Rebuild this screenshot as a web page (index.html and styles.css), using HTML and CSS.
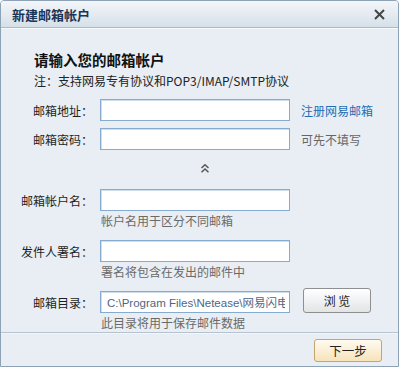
FILE: index.html
```html
<!DOCTYPE html>
<html lang="zh-CN">
<head>
    <meta charset="UTF-8">
    <title>新建邮箱帐户</title>
    <link rel="stylesheet" href="styles.css">
</head>
<body>
    <div class="window">
        <div class="titlebar">
            <span class="title">新建邮箱帐户</span>
            <span class="close">
                <svg width="11" height="11" viewBox="0 0 11 11">
                    <path d="M1 1 L10 10 M10 1 L1 10" stroke="#454545" stroke-width="2" fill="none"/>
                </svg>
            </span>
        </div>

        <div class="content">
            <h1 class="heading">请输入您的邮箱帐户</h1>
            <p class="note">注：支持网易专有协议和POP3/IMAP/SMTP协议</p>

            <div class="row first">
                <label class="label">邮箱地址：</label>
                <input class="field" type="text">
                <a href="#" class="side link">注册网易邮箱</a>
            </div>
            <div class="row">
                <label class="label">邮箱密码：</label>
                <input class="field" type="password">
                <span class="side muted">可先不填写</span>
            </div>

            <div class="toggle">
                <svg width="8" height="9" viewBox="0 0 8 9">
                    <path d="M0.5 4 L4 0.8 L7.5 4 M0.5 8.2 L4 5 L7.5 8.2" stroke="#555" stroke-width="1.5" fill="none"/>
                </svg>
            </div>

            <div class="row">
                <label class="label">邮箱帐户名：</label>
                <input class="field" type="text">
            </div>
            <div class="hint">帐户名用于区分不同邮箱</div>

            <div class="row gap">
                <label class="label">发件人署名：</label>
                <input class="field" type="text">
            </div>
            <div class="hint">署名将包含在发出的邮件中</div>

            <div class="row gap">
                <label class="label">邮箱目录：</label>
                <input class="field path" type="text" value="C:\Program Files\Netease\网易闪电邮">
                <button class="browse">浏 览</button>
            </div>
            <div class="hint">此目录将用于保存邮件数据</div>
        </div>

        <div class="footer">
            <button class="next">下一步</button>
        </div>
    </div>
</body>
</html>
```

FILE: styles.css
```css
body {
    margin: 0;
    background: #fff;
    font-family: "Noto Sans CJK SC", "Microsoft YaHei", sans-serif;
    font-size: 12px;
    color: #1e1e1e;
}
.window {
    width: 397px;
    height: 365px;
    border: 1px solid #8ea2b5;
    border-radius: 4px 4px 0 0;
    background: #e8eef3;
    display: flex;
    flex-direction: column;
    overflow: hidden;
}
.titlebar {
    height: 26px;
    display: flex;
    align-items: center;
    justify-content: space-between;
    padding: 0 12px 0 11px;
    background: linear-gradient(#f3f6f9, #d6e0e9);
    border-bottom: 1px solid #a9bbcb;
    box-shadow: 0 1px 0 #f6f9fb;
}
.title {
    font-size: 13px;
    font-weight: bold;
    color: #1b3556;
    line-height: 26px;
    margin-top: 2px;
}
.close {
    display: flex;
    margin-right: 1px;
}
.content {
    flex: 1;
    padding-top: 22px;
}
.heading {
    margin: 0 0 0 33px;
    font-size: 14.5px;
    font-weight: bold;
    line-height: 20px;
    color: #111;
}
.note {
    margin: 2px 0 0 33px;
    line-height: 18px;
    color: #222;
}
.row {
    display: flex;
    align-items: center;
    height: 22px;
    margin-top: 7px;
}
.row.first {
    margin-top: 9px;
}
.row.gap {
    margin-top: 10px;
}
.label {
    width: 92px;
    text-align: right;
    color: #1e1e1e;
}
.field {
    box-sizing: border-box;
    width: 190px;
    height: 22px;
    margin: 0 0 0 7px;
    padding: 0 4px;
    border: 1px solid #86abcf;
    box-shadow: inset 1px 1px 0 #cfdeec;
    background: #fff;
    font-family: inherit;
    font-size: 12px;
    outline: none;
}
.field.path {
    padding-left: 6px;
    font-family: "Liberation Sans", "Noto Sans CJK SC", sans-serif;
    font-size: 11.5px;
    color: #4f6584;
}
.side {
    margin-left: 11px;
}
.link {
    color: #1f6db5;
    text-decoration: none;
}
.muted {
    color: #666;
}
.toggle {
    height: 32px;
    display: flex;
    justify-content: center;
    align-items: flex-start;
    padding-left: 10px;
    box-sizing: border-box;
    padding-top: 14px;
}
.hint {
    margin: 1px 0 0 100px;
    line-height: 18px;
    color: #6a6a6a;
}
.browse {
    box-sizing: border-box;
    width: 68px;
    height: 25px;
    margin: -4px 0 0 13px;
    border: 1px solid #8d8f91;
    border-radius: 3px;
    background: linear-gradient(#ffffff, #e2e4e6);
    font-family: inherit;
    font-size: 12px;
    color: #222;
    padding: 0;
}
.footer {
    height: 36px;
    border-top: 1px solid #b5c3d0;
    box-shadow: inset 0 1px 0 #f4f7fa;
    display: flex;
    justify-content: flex-end;
    align-items: flex-start;
    padding: 6px 16px 0 0;
    box-sizing: border-box;
}
.next {
    box-sizing: border-box;
    width: 68px;
    height: 23px;
    border: 1px solid #c4a470;
    border-radius: 3px;
    background: linear-gradient(#fffbf2, #f6e3ba);
    font-family: inherit;
    font-size: 12.5px;
    color: #222;
    padding: 0;
}
```
